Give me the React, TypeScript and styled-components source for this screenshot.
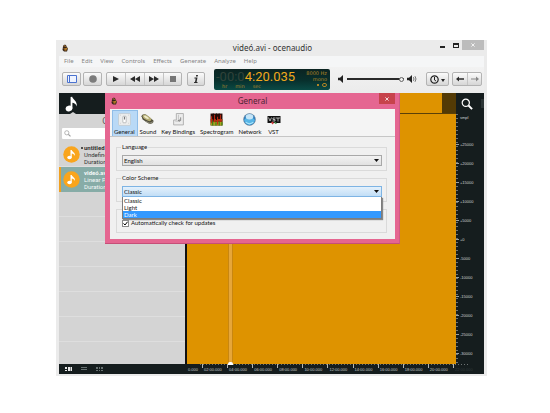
import React from "react";
import styled, { createGlobalStyle } from "styled-components";

const UI = `"Noto Sans", "Open Sans", sans-serif`;
const DIALOG = `Lato, "Liberation Sans", sans-serif`;
const RULER = `"Liberation Sans", Arial, sans-serif`;

const GlobalStyle = createGlobalStyle`
  *, *::before, *::after { box-sizing: border-box; }
  body { margin: 0; background: #fff; font-family: ${UI}; font-size: 6px; color: #222; }
  button, input, select { font: inherit; color: inherit; margin: 0; padding: 0; border: 0; }
  ul, h1, h2, p, fieldset { margin: 0; padding: 0; border: 0; font-weight: normal; list-style: none; }
  svg { display: block; }
`;

const Page = styled.div`
  min-height: 100vh;
  display: flex;
  padding: 40px 63px 37px 56px;
`;

const Window = styled.main`
  flex: 1;
  min-width: 0;
  display: flex;
  flex-direction: column;
  padding: 0 3px 2px;
  background: #ebebeb;
`;

const TitleBar = styled.header`
  display: grid;
  grid-template-columns: 48px 1fr 48px;
  height: 16px;
  align-items: center;
  padding-left: 2px;
`;

const WindowTitle = styled.h1`
  font-size: 8px;
  line-height: 16px;
  text-align: center;
  color: #333;
`;

const WindowButtons = styled.div`
  display: flex;
  align-self: start;
  justify-content: flex-end;
`;

const WindowButton = styled.button<{ $close?: boolean }>`
  display: grid;
  place-items: center;
  width: ${(p) => (p.$close ? 23 : 14)}px;
  height: 10px;
  color: ${(p) => (p.$close ? "#fff" : "#222")};
  background: ${(p) => (p.$close ? "#bcbcbc" : "transparent")};
`;

const MenuBar = styled.nav`
  display: flex;
  gap: 8px;
  height: 11px;
  padding: 0 5px;
  background: #f5f6f7;
  line-height: 11px;
`;

const MenuLink = styled.a`
  color: #858585;
  text-decoration: none;
`;

const Toolbar = styled.div`
  display: flex;
  align-items: center;
  height: 26px;
  padding: 0 2px 2px 3px;
  background: linear-gradient(#f2f2f2, #ebebeb);
`;

const ButtonGroup = styled.div<{ $gap: number }>`
  flex: none;
  display: flex;
  height: 14px;
  margin-right: ${(p) => p.$gap}px;
  border: 1px solid #b3b3b3;
  border-radius: 2px;
  background: linear-gradient(#fbfbfb, #d6d6d6);
  overflow: hidden;
`;

const ToolButton = styled.button<{ $width: number }>`
  display: grid;
  place-items: center;
  width: ${(p) => p.$width}px;
  background: transparent;
  & + & { border-left: 1px solid #c4c4c4; }
`;

const Lcd = styled.section`
  flex: none;
  display: flex;
  justify-content: space-between;
  width: 116px;
  height: 21px;
  padding: 1px 3px 0 2px;
  border-radius: 2px;
  background: linear-gradient(#0b2321, #08302d 55%, #0a4a45);
`;

const Clock = styled.p`
  font: 13px/14px Roboto, sans-serif;
  white-space: nowrap;
  color: #f0a81c;
`;

const DimDigits = styled.span`
  color: #31433a;
`;

const Units = styled.p`
  display: flex;
  gap: 8px;
  padding-left: 6px;
  font: 5px/5px "DejaVu Sans", sans-serif;
  color: #a8812a;
`;

const LcdInfo = styled.div`
  font: 5px/6px "DejaVu Sans", sans-serif;
  text-align: right;
  white-space: nowrap;
  color: #b08425;
`;

const LcdStatus = styled.div`
  display: flex;
  justify-content: flex-end;
  height: 6px;
  align-items: center;
`;

const Volume = styled.div`
  flex: 1;
  min-width: 0;
  display: flex;
  align-items: center;
  gap: 3px;
  margin: 0 9px 0 8px;
  & > svg { flex: none; }
`;

const VolumeSlider = styled.input`
  appearance: none;
  flex: 1;
  width: 0;
  min-width: 0;
  height: 6px;
  background: linear-gradient(#2a2a2a, #2a2a2a) center / 100% 2px no-repeat;
  &::-webkit-slider-thumb {
    appearance: none;
    width: 5px;
    height: 5px;
    border: 1px solid #666;
    border-radius: 50%;
    background: #eee;
  }
`;

const Workspace = styled.div`
  position: relative;
  flex: 1;
  display: grid;
  grid-template-columns: 126px 1fr 28px;
  grid-template-rows: 21px 1fr 10px;
  background: #151d1e;
`;

const PanelHeader = styled.div`
  position: relative;
  display: flex;
  align-items: center;
  padding-left: 5px;
  &::after {
    content: "";
    position: absolute;
    bottom: 0;
    left: 11px;
    border: solid transparent;
    border-width: 0 3px 2px;
    border-bottom-color: #d4d4d4;
  }
`;

const Sidebar = styled.aside`
  background: #d4d4d4;
`;

const SidebarTitle = styled.h2`
  height: 14px;
  font-size: 8px;
  line-height: 14px;
  text-align: center;
  color: #555;
`;

const SearchBox = styled.label`
  display: flex;
  align-items: center;
  gap: 2px;
  height: 11px;
  margin: 0 3px 3px;
  padding: 0 2px;
  border-radius: 1px;
  background: #fff;
`;

const SearchInput = styled.input`
  flex: 1;
  min-width: 0;
  background: transparent;
  outline: 0;
`;

const FileList = styled.ul`
  height: 221px;
  background: repeating-linear-gradient(#d4d4d4 0 24px, #dedede 24px 25px);
`;

const FileItem = styled.li<{ $selected?: boolean }>`
  display: grid;
  grid-template-columns: 17px 4px 1fr;
  align-items: center;
  height: 25px;
  padding-left: ${(p) => (p.$selected ? 2 : 4)}px;
  border-left: ${(p) => (p.$selected ? "2px solid #f0a020" : "0")};
  background: ${(p) => (p.$selected ? "#87aca7" : "transparent")};
  color: ${(p) => (p.$selected ? "#f4f8f7" : "#333")};
  font: 6px/7px Roboto, sans-serif;
  white-space: nowrap;
`;

const ModifiedMark = styled.span`
  align-self: start;
  justify-self: end;
  width: 2px;
  height: 2px;
  margin: 5px 1px 0 0;
  border-radius: 50%;
  background: #222;
`;

const FileName = styled.strong`
  display: block;
`;

const Overview = styled.div`
  border-left: 2px solid #111;
  border-bottom: 1px solid #5a4008;
  background: #de9300;
  display: flex;
  justify-content: flex-end;
`;

const OverviewShade = styled.div`
  width: 14px;
  background: #533a05;
`;

const ZoomTools = styled.div`
  display: flex;
  align-items: center;
  justify-content: space-between;
  padding-left: 5px;
`;

const Grip = styled.div`
  width: 3px;
  height: 9px;
  background: #2b3435;
`;

const Wave = styled.div`
  position: relative;
  border-left: 2px solid #111;
  background: #de9300;
`;

const Playhead = styled.div`
  position: absolute;
  top: 0;
  bottom: 0;
  left: 41px;
  width: 5px;
  border: solid #c88610;
  border-width: 0 1px;
  background: #e6a63a;
  &::after {
    content: "";
    position: absolute;
    bottom: -1px;
    left: -1px;
    width: 5px;
    height: 3px;
    border-radius: 2px 2px 0 0;
    background: #fff;
  }
`;

const AmplitudeRuler = styled.div`
  display: flex;
  flex-direction: column;
  padding-bottom: 1px;
  background: repeating-linear-gradient(#6d7373 0 1px, transparent 1px 4px) left / 2px 100% no-repeat;
  color: #d0d4d4;
  font: 4px/8px ${RULER};
`;

const AmplitudeUnit = styled.div`
  height: 21px;
  padding-left: 4px;
`;

const AmplitudeMark = styled.div`
  flex: 1;
  display: flex;
  align-items: center;
  gap: 1px;
  &::before {
    content: "";
    width: 3px;
    height: 1px;
    background: #9da3a3;
  }
`;

const SidebarFooter = styled.footer`
  display: flex;
  align-items: center;
  gap: 7px;
  padding-left: 6px;
`;

const ViewButton = styled.button<{ $active?: boolean }>`
  width: 8px;
  height: 6px;
  background: transparent;
  color: ${(p) => (p.$active ? "#e8e8e8" : "#667070")};
`;

const TimeRuler = styled.div`
  grid-column: 2 / 4;
  display: flex;
  padding: 0 6px 0 2px;
  overflow: hidden;
  background: repeating-linear-gradient(90deg, #6d7373 0 1px, transparent 1px 3px) top / 270px 1px no-repeat;
  color: #c4c9c9;
  font: 4px/12px ${RULER};
`;

const TimeMark = styled.div<{ $first?: boolean; $faint?: boolean }>`
  flex: ${(p) => (p.$first ? "0 0 15px" : "1")};
  display: flex;
  gap: 1px;
  color: ${(p) => (p.$faint ? "#303a3b" : "inherit")};
  &::before {
    content: "";
    width: ${(p) => (p.$first ? 0 : 1)}px;
    height: 4px;
    background: #b0b5b5;
  }
`;

const Dialog = styled.section`
  position: absolute;
  top: 0;
  left: 46px;
  right: 84px;
  padding: 0 4px 4px 5px;
  border-bottom: 1px solid #c64f78;
  border-right: 1px solid #d05a84;
  background: #e56691;
  font-family: ${DIALOG};
  line-height: 8px;
  color: #111;
`;

const DialogTitleBar = styled.header`
  display: grid;
  grid-template-columns: 16px 1fr 16px;
  height: 16px;
  align-items: center;
`;

const DialogTitle = styled.h2`
  font: 8px/16px ${UI};
  text-align: center;
  color: #4c2433;
`;

const CloseButton = styled.button`
  display: grid;
  place-items: center;
  align-self: start;
  height: 11px;
  background: #c7434b;
  color: #fff;
`;

const DialogBody = styled.div`
  background: #f0f0f0;
`;

const Tabs = styled.div`
  display: flex;
  height: 28px;
  padding: 1px 2px 0;
  border-bottom: 1px solid #c6c6c6;
  background: #f4f4f4;
`;

const Tab = styled.button<{ $active?: boolean }>`
  display: flex;
  flex-direction: column;
  align-items: center;
  justify-content: space-between;
  padding: 2px 2px 0 1px;
  border: 1px solid ${(p) => (p.$active ? "#8fbde8" : "transparent")};
  border-bottom: 0;
  background: ${(p) => (p.$active ? "#b9d9f6" : "transparent")};
  line-height: 8px;
`;

const Settings = styled.form`
  display: flex;
  flex-direction: column;
  gap: 3px;
  padding: 6px 8px 6px 6px;
`;

const Group = styled.fieldset<{ $plain?: boolean }>`
  min-width: 0;
  height: ${(p) => (p.$plain ? 24 : 28)}px;
  margin-top: ${(p) => (p.$plain ? 4 : 0)}px;
  border: 1px solid #dadada;
  padding: 0 4px 0 5px;
`;

const Legend = styled.legend`
  height: 8px;
  margin-left: -1px;
  padding: 0 1px;
`;

const SelectBox = styled.div<{ $open?: boolean }>`
  position: relative;
  display: grid;
  align-items: center;
  height: 11px;
  margin-top: 4px;
  border: 1px solid ${(p) => (p.$open ? "#7eb4e4" : "#a8a8a8")};
  background: ${(p) => (p.$open ? "linear-gradient(#e4f1fc, #c2def6)" : "linear-gradient(#f2f2f2, #e1e1e1)")};
`;

const Select = styled.select`
  appearance: none;
  grid-area: 1 / 1;
  width: 100%;
  height: 9px;
  padding-left: 1px;
  background: transparent;
  line-height: 9px;
  outline: 0;
`;

const SelectArrow = styled.svg`
  grid-area: 1 / 1;
  justify-self: end;
  margin-right: 2px;
  pointer-events: none;
`;

const Options = styled.ul`
  position: absolute;
  z-index: 1;
  top: 10px;
  left: -1px;
  right: -1px;
  border: 1px solid #7d7d7d;
  border-top-width: 0;
  background: #fff;
  box-shadow: 1px 1px 1px #888;
`;

const Option = styled.li<{ $active?: boolean }>`
  height: 7px;
  padding-left: 1px;
  line-height: 7px;
  background: ${(p) => (p.$active ? "#3399ff" : "transparent")};
  color: ${(p) => (p.$active ? "#fff" : "inherit")};
`;

const CheckLabel = styled.label`
  display: flex;
  align-items: center;
  gap: 2px;
  height: 8px;
  margin-top: 9px;
`;

const CheckBox = styled.input`
  appearance: none;
  width: 7px;
  height: 7px;
  border: 1px solid #888;
  background: #fff;
  &:checked {
    background: #fff url("data:image/svg+xml,%3Csvg xmlns='http://www.w3.org/2000/svg' viewBox='0 0 5 5'%3E%3Cpath d='M.5 2.4 2 4 4.6.7' fill='none' stroke='%23000' stroke-width='1'/%3E%3C/svg%3E") center / 5px 5px no-repeat;
  }
`;

const AppIcon = () => (
  <svg width="8" height="8" viewBox="0 0 16 16" aria-hidden="true">
    <path d="M4 5C4 1 11 0 11 5L14 9 12 15H6L3 12Z" fill="#332218" />
    <path d="M6 5C6 3 9 3 9 5" fill="none" stroke="#c9903c" strokeWidth="2" />
    <path d="M5 8h7l-1 5H7Z" fill="#d18b24" />
    <path d="M7 8v5M10 8v4" stroke="#49301a" />
    <circle cx="12" cy="8" r="1" fill="#f2c65c" />
  </svg>
);

const Note = ({ size }: { size: number }) => (
  <svg width={size} height={size} viewBox="0 0 16 16" aria-hidden="true">
    <ellipse cx="5" cy="12.5" rx="3.4" ry="2.8" transform="rotate(-15 5 12.5)" fill="#fff" />
    <path d="M6.6 1 8.2.7C8.5 3.5 13.5 4.5 12.8 10.5 12 8 10 7 8.4 6.8V12.5H6.6Z" fill="#fff" />
  </svg>
);

const FileIcon = () => (
  <svg width="17" height="17" viewBox="0 0 34 34" aria-hidden="true">
    <circle cx="17" cy="17" r="16.5" fill="#f9a51d" />
    <ellipse cx="13" cy="23" rx="4.5" ry="3.6" fill="#fff" />
    <path d="M15 8h2.5c.5 4 8 5 6 12-1-3-3-4.500-6-5v8H15Z" fill="#fff" />
  </svg>
);

const Magnifier = ({ size, color }: { size: number; color: string }) => (
  <svg width={size} height={size} viewBox="0 0 12 12" fill="none" stroke={color} aria-hidden="true">
    <circle cx="4.800" cy="4.800" r="3.600" strokeWidth="1.200" />
    <path d="m7.500 7.500 3.600 3.600" strokeWidth="1.900" />
  </svg>
);

const Cross = ({ size }: { size: number }) => (
  <svg width={size} height={size} viewBox="0 0 5 5" stroke="currentColor" aria-hidden="true">
    <path d="m.5.5 4 4m0-4-4 4" />
  </svg>
);

const Speaker = ({ loud }: { loud?: boolean }) => (
  <svg width={loud ? 10 : 6} height="8" viewBox={loud ? "0 0 10 8" : "0 0 6 8"} aria-hidden="true">
    <path d="M0 2.700h2L5 0v8L2 5.300H0Z" fill="#222" />
    {loud && <path d="M6.400 2.200q1.200 1.800 0 3.600M8 1.200q2 2.800 0 5.600" fill="none" stroke="#555" strokeWidth=".8" />}
  </svg>
);

const DownArrow = () => (
  <SelectArrow width="5" height="3" viewBox="0 0 5 3" aria-hidden="true">
    <path d="M0 0h5L2.500 3Z" fill="#111" />
  </SelectArrow>
);

const Glyph = ({ width, path }: { width: number; path: string }) => (
  <svg width={width} height="8" viewBox={`0 0 ${width} 8`} aria-hidden="true">
    <path d={path} fill="#2b2b2b" />
  </svg>
);

const ViewGlyph = ({ path }: { path: string }) => (
  <svg width="8" height="6" viewBox="0 0 8 6" aria-hidden="true">
    <path d={path} fill="currentColor" />
  </svg>
);

const tabIcons: Record<string, React.ReactNode> = {
  General: (
    <>
      <rect x="1" y="1" width="22" height="22" rx="2" fill="#eceded" stroke="#b9bfc3" />
      <rect x="9" y="6" width="6" height="12" rx="1" fill="#fff" stroke="#8b8f92" />
      <path d="M11 7h2v5h-2z" fill="#777" />
      <path d="M4 4h1M19 4h1M4 19h1M19 19h1" stroke="#999" />
    </>
  ),
  Sound: (
    <>
      <path d="M1 6C2 2 7 1 12 5L23 14C24 18 20 21 15 20L3 12Z" fill="#4f4c3a" />
      <ellipse cx="11" cy="9" rx="9" ry="4" transform="rotate(30 11 9)" fill="#b5ae76" />
      <ellipse cx="10" cy="8" rx="5" ry="2" transform="rotate(30 10 8)" fill="#f0eccb" />
      <path d="m8 15 8 4 6-3" fill="none" stroke="#8c8a79" strokeWidth="2" />
    </>
  ),
  "Key Bindings": (
    <>
      <path d="M8 1h13v21H3V13h5Z" fill="#ececec" stroke="#a5a5a5" strokeWidth="1.500" />
      <path d="M12 3v12H6" fill="none" stroke="#c8c8c8" strokeWidth="2" />
      <path d="M16 8v6h-4m2-2-2 2 2 2" fill="none" stroke="#777" strokeWidth="1.500" />
    </>
  ),
  Spectrogram: (
    <>
      <path d="M1 1h22v22H1z" fill="#2c0d08" />
      <path d="M1 16h22v7H1z" fill="#a7a51d" />
      <path d="M1 11h22v5H1z" fill="#a43a12" />
      <path d="M3 6v13M8 3v14M14 7v14M19 3v13" stroke="#c92a13" strokeWidth="2" />
      <path d="M5 14v9M11 17v6M17 15v8M22 17v6" stroke="#377a18" strokeWidth="2" />
      <path d="M6 1v13M12 1v12M17 1v10" stroke="#180b08" strokeWidth="2" />
    </>
  ),
  Network: (
    <>
      <circle cx="12" cy="12" r="11" fill="#2e7fc0" stroke="#77838d" />
      <path d="M2 13C6 7 17 7 22 13 20 24 5 25 2 13Z" fill="#58b5e6" />
      <ellipse cx="12" cy="7" rx="7" ry="5" fill="#c5e5f7" />
      <path d="M5 17q7 6 14 0" stroke="#aee6fa" fill="none" strokeWidth="2" />
    </>
  ),
};

const menus = ["File", "Edit", "View", "Controls", "Effects", "Generate", "Analyze", "Help"];
const tabs = ["General", "Sound", "Key Bindings", "Spectrogram", "Network", "VST"];
const amplitudes = ["+25000", "+20000", "+15000", "+10000", "+5000", "+0", "-5000", "-10000", "-15000", "-20000", "-25000", "-30000"];
const times = ["02:00.000", "04:00.000", "06:00.000", "08:00.000", "10:00.000", "12:00.000", "14:00.000", "16:00.000", "18:00.000", "20:00.000", "22:00.000"];

const TabIcon = ({ name }: { name: string }) =>
  name === "VST" ? (
    <svg width="14" height="13" viewBox="0 0 28 24" aria-hidden="true">
      <path d="M1 5h26v14H1z" fill="#111" />
      <path d="m3 8 3 7 3-7m8 1h-5v3h4v3h-5m7-6h8m-4 0v7" fill="none" stroke="#ddd" strokeWidth="1.500" />
      <path d="m8 18 3-2 3 3-3 3Z" fill="#cc3939" />
      <path d="m14 18 3-1 3 3-3 1Z" fill="#4b9652" />
    </svg>
  ) : (
    <svg width="13" height="13" viewBox="0 0 24 24" aria-hidden="true">{tabIcons[name]}</svg>
  );

const GeneralDialog = () => (
  <Dialog role="dialog" aria-label="General">
    <DialogTitleBar>
      <AppIcon />
      <DialogTitle>General</DialogTitle>
      <CloseButton aria-label="Close dialog"><Cross size={4} /></CloseButton>
    </DialogTitleBar>
    <DialogBody>
      <Tabs role="tablist">
        {tabs.map((name, i) => (
          <Tab key={name} role="tab" aria-selected={i === 0} $active={i === 0}>
            <TabIcon name={name} />
            {name}
          </Tab>
        ))}
      </Tabs>
      <Settings>
        <Group>
          <Legend>Language</Legend>
          <SelectBox>
            <Select aria-label="Language" defaultValue="English"><option>English</option></Select>
            <DownArrow />
          </SelectBox>
        </Group>
        <Group>
          <Legend>Color Scheme</Legend>
          <SelectBox $open>
            <Select aria-label="Color Scheme" defaultValue="Classic">
              <option>Classic</option>
              <option>Light</option>
              <option>Dark</option>
            </Select>
            <DownArrow />
            <Options role="listbox" aria-label="Color Scheme">
              <Option role="option">Classic</Option>
              <Option role="option">Light</Option>
              <Option role="option" aria-selected $active>Dark</Option>
            </Options>
          </SelectBox>
        </Group>
        <Group $plain aria-label="Updates">
          <CheckLabel>
            <CheckBox type="checkbox" defaultChecked />
            Automatically check for updates
          </CheckLabel>
        </Group>
      </Settings>
    </DialogBody>
  </Dialog>
);

export default function App() {
  return (
    <>
      <GlobalStyle />
      <Page>
        <Window>
          <TitleBar>
            <AppIcon />
            <WindowTitle>videó.avi - ocenaudio</WindowTitle>
            <WindowButtons>
              <WindowButton aria-label="Minimize">
                <svg width="5" height="6" viewBox="0 0 5 6"><path d="M0 4h5v2H0z" fill="currentColor" /></svg>
              </WindowButton>
              <WindowButton aria-label="Maximize">
                <svg width="6" height="5" viewBox="0 0 6 5"><path d="M0 0h6v5H0zM1 2v2h4V2z" fillRule="evenodd" fill="currentColor" /></svg>
              </WindowButton>
              <WindowButton $close aria-label="Close"><Cross size={4} /></WindowButton>
            </WindowButtons>
          </TitleBar>
          <MenuBar>
            {menus.map((m) => <MenuLink key={m} href="#">{m}</MenuLink>)}
          </MenuBar>
          <Toolbar>
            <ButtonGroup $gap={2}>
              <ToolButton $width={17} aria-label="Toggle panel">
                <svg width="10" height="8" viewBox="0 0 10 8"><path d="M.5.5h9v7h-9zM2.500.5v7" fill="#eef3ff" stroke="#4a72cf" /></svg>
              </ToolButton>
            </ButtonGroup>
            <ButtonGroup $gap={4}>
              <ToolButton $width={17} aria-label="Record">
                <svg width="8" height="8" viewBox="0 0 8 8"><circle cx="4" cy="4" r="3.800" fill="#7c7c7c" /></svg>
              </ToolButton>
            </ButtonGroup>
            <ButtonGroup $gap={5}>
              <ToolButton $width={18} aria-label="Play"><Glyph width={6} path="M0 1 6 4 0 7Z" /></ToolButton>
              <ToolButton $width={19} aria-label="Rewind"><Glyph width={10} path="M5 1v6L0 4ZM10 1v6L5 4Z" /></ToolButton>
              <ToolButton $width={19} aria-label="Forward"><Glyph width={10} path="M0 1 5 4 0 7ZM5 1l5 3-5 3Z" /></ToolButton>
              <ToolButton $width={18} aria-label="Stop">
                <svg width="6" height="6" viewBox="0 0 6 6"><path d="M0 0h6v6H0z" fill="#777" /></svg>
              </ToolButton>
            </ButtonGroup>
            <ButtonGroup $gap={9}>
              <ToolButton $width={16} aria-label="Information">
                <Glyph width={6} path="M3.200 0h1.800L4.700 1.500H2.900ZM1.500 2.500H4.500L3.600 7h1L4.400 8H1L1.200 7H2L2.700 3.400H1.300Z" />
              </ToolButton>
            </ButtonGroup>
            <Lcd>
              <div>
                <Clock><DimDigits>-00:0</DimDigits>4:20.035</Clock>
                <Units><span>hr</span><span>min</span><span>sec</span></Units>
              </div>
              <LcdInfo>
                <div>8000 Hz</div>
                <div>mono</div>
                <LcdStatus>
                  <svg width="10" height="4" viewBox="0 0 10 4" aria-hidden="true">
                    <path d="M0 1h2v2H0z" fill="#b08425" />
                    <rect x="5.500" y=".5" width="4" height="3" rx="1.500" fill="none" stroke="#b08425" />
                  </svg>
                </LcdStatus>
              </LcdInfo>
            </Lcd>
            <Volume>
              <Speaker />
              <VolumeSlider type="range" aria-label="Volume" min={0} max={100} defaultValue={100} />
              <Speaker loud />
            </Volume>
            <ButtonGroup $gap={3}>
              <ToolButton $width={21} aria-label="History">
                <svg width="15" height="9" viewBox="0 0 15 9">
                  <circle cx="4.500" cy="4.500" r="3.700" fill="none" stroke="#222" strokeWidth="1.200" />
                  <path d="M4.500 2v3l1.500 1" fill="none" stroke="#222" />
                  <path d="M11 4h4l-2 3Z" fill="#222" />
                </svg>
              </ToolButton>
            </ButtonGroup>
            <ButtonGroup $gap={0}>
              <ToolButton $width={14} aria-label="Back"><Glyph width={8} path="M0 4 3 1.500v1.700h5v1.600H3v1.700Z" /></ToolButton>
              <ToolButton $width={14} aria-label="Next">
                <svg width="8" height="8" viewBox="0 0 8 8"><path d="M0 3.500h5V1.500L8 4 5 6.500v-2H0Z" fill="#888" /></svg>
              </ToolButton>
            </ButtonGroup>
          </Toolbar>
          <Workspace>
            <PanelHeader><Note size={16} /></PanelHeader>
            <Overview><OverviewShade /></Overview>
            <ZoomTools><Magnifier size={12} color="#fff" /><Grip /></ZoomTools>

            <Sidebar>
              <SidebarTitle>Open Files</SidebarTitle>
              <SearchBox>
                <Magnifier size={7} color="#999" />
                <SearchInput type="text" aria-label="Search files" />
              </SearchBox>
              <FileList>
                <FileItem>
                  <FileIcon />
                  <ModifiedMark />
                  <div><FileName>untitled</FileName>Undefined<br />Duration</div>
                </FileItem>
                <FileItem $selected>
                  <FileIcon />
                  <span />
                  <div><FileName>videó.avi</FileName>Linear PCM<br />Duration</div>
                </FileItem>
              </FileList>
            </Sidebar>
            <Wave><Playhead /></Wave>
            <AmplitudeRuler>
              <AmplitudeUnit>smpl</AmplitudeUnit>
              {amplitudes.map((a) => <AmplitudeMark key={a}>{a}</AmplitudeMark>)}
            </AmplitudeRuler>

            <SidebarFooter>
              <ViewButton $active aria-label="Details view"><ViewGlyph path="M0 1h2v2H0zM0 4h2v1H0zM3 1h2v4H3zM5.500 1H7v4H5.500z" /></ViewButton>
              <ViewButton aria-label="List view"><ViewGlyph path="M1 1h6v1H1zM1 3h6v1H1z" /></ViewButton>
              <ViewButton aria-label="Grid view"><ViewGlyph path="M1 1h2v2H1zM4 1h1v2H4zM6 1h2v2H6zM1 4h2v1H1zM4 4h1v1H4zM6 4h2v1H6z" /></ViewButton>
            </SidebarFooter>
            <TimeRuler>
              <TimeMark $first>0.000</TimeMark>
              {times.map((t, i) => <TimeMark key={t} $faint={i === times.length - 1}>{t}</TimeMark>)}
            </TimeRuler>

            <GeneralDialog />
          </Workspace>
        </Window>
      </Page>
    </>
  );
}
